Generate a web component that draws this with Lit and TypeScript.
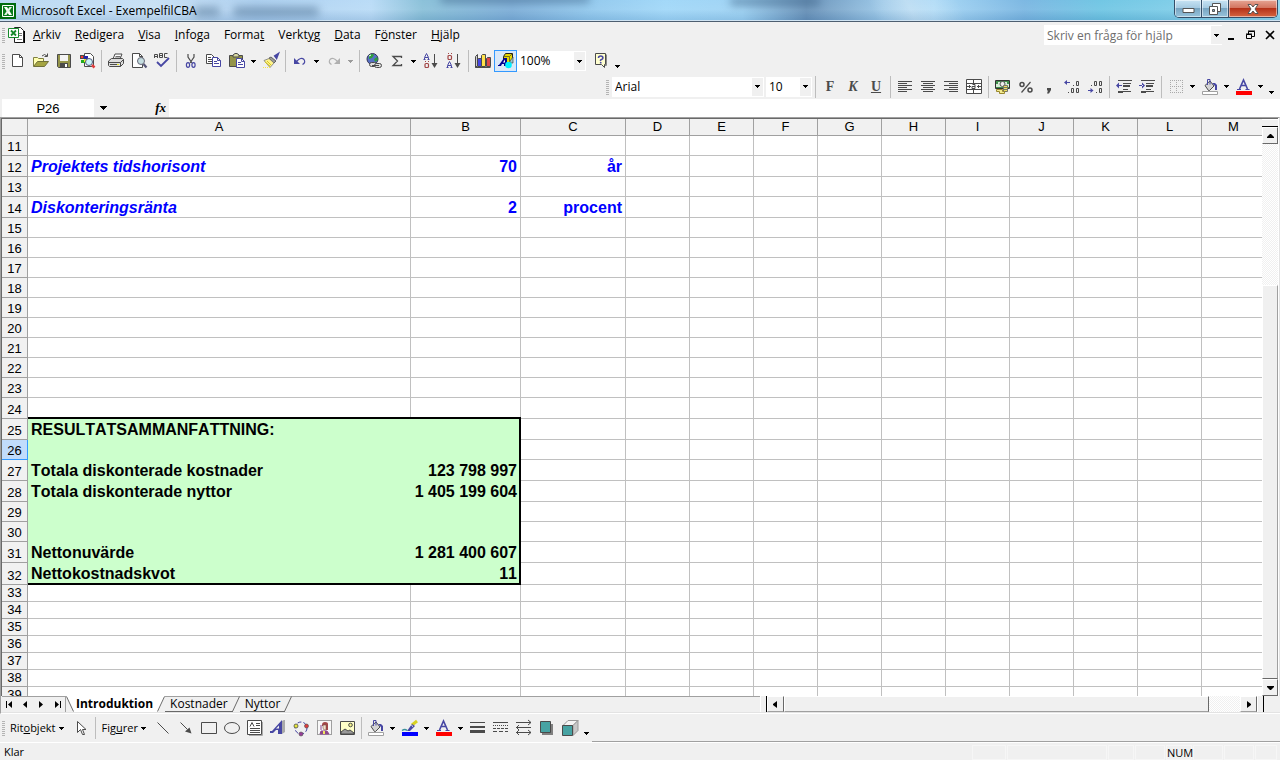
import { LitElement, html, svg, css, nothing, TemplateResult } from "lit";
import { customElement, property } from "lit/decorators.js";
import { classMap } from "lit/directives/class-map.js";

const INK = "#4b4b4b";
const BLUE = "#4747a3";

const page = (x: number, y: number) => svg`
  <path d="M${x + 0.5} ${y + 0.5}h5l3 3v6h-8z" fill="#fff" stroke=${BLUE}/>
  <path d="M${x + 5.5} ${y + 0.5}v3h3M${x + 2} ${y + 4.5}h3M${x + 2} ${y + 6.5}h5" fill="none" stroke=${BLUE}/>`;

const bucket = svg`
  <path d="M3 6.500l5-4.500l4 5l-4.500 4.500h-1z" fill="#d4d4d4" stroke=${INK}/>
  <path d="M5.500 6v-5.500h2.500v5" fill="none" stroke=${BLUE}/>
  <path d="M10 4h3l2 2v5h-2v-4z" fill=${BLUE}/>`;

const sortA = (y: number) =>
  svg`<path d="M1.500 ${y + 6}v-1.500l2-4 2 4v1.500M2 ${y + 4.5}h3M.5 ${y + 6.5}h2M4.500 ${y + 6.5}h2" fill="none" stroke=${BLUE}/>`;
const sortO = (y: number) =>
  svg`<path d="M2 ${y + 0.5}h1M5 ${y + 0.5}h1" stroke="#a34747"/><rect x="2" y=${y + 2.5} width="3.500" height="4" rx="1" fill="none" stroke="#a34747" stroke-width="1.200"/>`;
const sortArrow = svg`<path d="M11.500 1v9" stroke=${INK}/><path d="M8.500 10h6l-3 5z" fill=${INK}/>`;

const icons: Record<string, unknown> = {
  none: nothing,
  newDoc: svg`<path d="M2.500 1.500h7l3 3v9h-10z" fill="#fff" stroke=${INK}/><path d="M9.500 1.500v3h3" fill="none" stroke=${INK}/>`,
  open: svg`<path d="M.5 13V4.500h4l1 1h5V9" fill="#ffffb0" stroke="#808040"/><path d="M.5 13.500l4-5h11l-4 5z" fill="#a5a542" stroke="#70703a"/><path d="M9 3q2.500-3 5 0M14.500 .5v3h-3" fill="none" stroke=${INK}/>`,
  save: svg`<path d="M1.500 1.500h13v13h-12l-1-1z" fill="#94944a" stroke=${INK}/><path d="M4 2h8v6H4z" fill="#f4f4f4"/><path d="M4 10h8v4H4z" fill=${INK}/><path d="M9 11h2v3H9z" fill="#fff"/>`,
  search: svg`<path d="M5.500 .5h6l3 3v10h-9z" fill="#fff" stroke=${INK}/><path d="M1 2h4v4H1z" fill=${INK}/><path d="M2 3h2v2H2z" fill="#f33"/><path d="M5 3h4v4H5z" fill="#22a"/><path d="M2 7h4v3H2z" fill="#2a2"/><path d="M5 6h3v3H5z" fill="#ee2"/><circle cx="10" cy="9" r="3.500" fill="#c9f4fa" stroke="#557"/><path d="M13 12l2.500 2.500" stroke="#e03c3c" stroke-width="2.500"/>`,
  print: svg`<path d="M5 6l2-5h7l-2 5z" fill="#fff" stroke=${INK}/><path d="M7.500 3.500h5M7 5h5" stroke=${INK} stroke-width=".8"/><path d="M.5 8l3-2.500h11l1 1v4l-3 3h-11l-1-1z" fill="#ddd" stroke=${INK}/><path d="M.5 9.500h12l3-3M12.500 9.500v4M2 11.500h9" fill="none" stroke=${INK}/><path d="M9 11h2v1H9z" fill="#e8e820"/>`,
  preview: svg`<path d="M1.500 .5h7l3 3v11h-10z" fill="#fff" stroke=${INK}/><path d="M8.500 .5v3h3" fill="none" stroke=${INK}/><circle cx="10" cy="8" r="3.500" fill="#c4dde0" stroke="#667"/><path d="M12.500 11l3 3.500" stroke="#557" stroke-width="2.200"/>`,
  spell: svg`<path d="M.5 5V1.500h3V5M.5 3.500h3M5.500 .5V4.500h3v-4zM5.500 2.500h3M13.500 .5h-3v4h3" fill="none" stroke=${INK}/><path d="M3 9l4 4l8-8" fill="none" stroke=${BLUE} stroke-width="1.800"/>`,
  cut: svg`<path d="M5 1v3l4 6M11 1v3l-4 6" fill="none" stroke=${INK} stroke-width="1.200"/><ellipse cx="5" cy="12" rx="1.600" ry="2.300" fill="none" stroke=${BLUE} stroke-width="1.200"/><ellipse cx="10.500" cy="12" rx="1.600" ry="2.300" fill="none" stroke=${BLUE} stroke-width="1.200"/>`,
  copy: svg`<path d="M.5 1.500h5l3 3v6h-8z" fill="#fff" stroke=${INK}/><path d="M2 4.500h3M2 6.500h5M2 8.500h5" stroke=${INK}/>${page(6, 4)}`,
  paste: svg`<path d="M.5 2.500h13v11H.5z" fill="#94944a" stroke=${INK}/><path d="M4 4V2l2-1.500h2L10 2v2z" fill="#d8d8a0" stroke=${INK}/>${page(7, 5)}`,
  brush: svg`<path d="M15 1l-3 2 1.500 2z" fill=${BLUE} stroke=${BLUE} stroke-width="2"/><path d="M8 4l5 4-2 2-5-5z" fill="#999" stroke=${INK} stroke-width=".8"/><path d="M6 5.500l5 4.500-4 4.500-6-7z" fill="#fff38a" stroke="#777" stroke-width=".8"/><path d="M2 9l5 4M4 8l4 4" stroke="#d8c820"/><path d="M0 14.500h7" stroke="#f4e34a" stroke-dasharray="1 1"/>`,
  undo: svg`<path d="M2 5v6h6z" fill=${BLUE}/><path d="M4.500 8.500Q9 3.500 12 6.500q2 3-1.500 5" fill="none" stroke=${BLUE} stroke-width="1.200"/>`,
  redo: svg`<path d="M14 5v6H8z" fill="#b0b0b0"/><path d="M11.500 8.500Q7 3.500 4 6.500q-2 3 1.500 5" fill="none" stroke="#b0b0b0" stroke-width="1.200"/>`,
  link: svg`<circle cx="6.500" cy="6" r="5.500" fill="#5770c4" stroke="#335"/><path d="M3 2q4-2 5 0l-2 3-3 1zM8 6l3-2 1 3-3 2z" fill="#2f9e3c"/><path d="M3 3l2-1" stroke="#fff"/><rect x="3.500" y="9.500" width="7" height="4" rx="2" fill="#ddd" stroke=${INK}/><rect x="8.500" y="10.500" width="7" height="4" rx="2" fill="#ddd" stroke=${INK}/><path d="M6 12.500h7" stroke=${INK}/>`,
  sum: svg`<path d="M12.500 5V3.500H4l4.500 4.500L4 12.500h8.500V11" fill="none" stroke=${INK} stroke-width="1.300"/>`,
  sortUp: svg`${sortA(0)}${sortO(8)}${sortArrow}`,
  sortDown: svg`${sortO(0)}${sortA(8)}${sortArrow}`,
  chart: svg`<path d="M.5 3.500l2-2v11l-2 2z" fill="#ccc" stroke=${INK}/><path d="M.5 14.500h15" stroke=${INK}/><path d="M2.500 6.500l1-1h3v8h-4z" fill="#4747e3" stroke=${INK}/><path d="M6.500 2.500l1-1h3v12h-4z" fill="#ffe14a" stroke=${INK}/><path d="M11.500 5.500l1-1h3v9h-4z" fill="#e04848" stroke=${INK}/>`,
  drawing: svg`<path d="M5.500 3.500l2-3h7v7l-3 3h-6z" fill="#e8d800" stroke="#222"/><path d="M6 3.500h5.500v5M11.500 3.500l3-3" fill="none" stroke="#77701c"/><path d="M0 12h1l5-7h3v8H6v-2H4l-1 2H0z" fill="#000090"/><path d="M5 9.500l2-3v3z" fill="#fff"/><path d="M12 8l3-4v6h-3z" fill="#9cc8d0" stroke="#333" stroke-width=".6"/><circle cx="10.500" cy="12" r="3.300" fill="#00f0ff"/>`,
  help: svg`<path d="M2.500 .5h10v11h-1v3l-3-3h-6z" fill="#ffffd0" stroke=${INK}/><path d="M13.500 1.500v11h-1.500" fill="none" stroke="#888"/><path d="M5.500 5q0-2 2.200-2t2.200 2q0 1-1.400 1.600T7.700 8M7.700 9v1.500" fill="none" stroke=${BLUE} stroke-width="1.600"/>`,
  left: svg`<path d="M1 2.500h14M1 4.500h9M1 6.500h14M1 8.500h9M1 10.500h14M1 12.500h9" stroke=${INK}/>`,
  center: svg`<path d="M1 2.500h14M3 4.500h10M1 6.500h14M3 8.500h10M1 10.500h14M3 12.500h10" stroke=${INK}/>`,
  right: svg`<path d="M1 2.500h14M6 4.500h9M1 6.500h14M6 8.500h9M1 10.500h14M6 12.500h9" stroke=${INK}/>`,
  merge: svg`<path d="M.5 .5h15v14H.5zM.5 4.500h15M.5 10.500h15M7.500 1v3M7.500 11v4" fill="#fff" stroke=${INK}/><path d="M1 7.500h4M3.500 6v3M11 7.500h4M12.500 6v3M6.500 5.500h2.500v4h-3v-2h3" fill="none" stroke=${INK}/>`,
  money: svg`<path d="M.5 1.500h14v8H.5z" fill="#d8ecd8" stroke="#333"/><path d="M1 2h13v1H1zM1 8h13v1H1zM1 3h2v2H1zM12 3h2v2h-2z" fill="#3f8f4c"/><circle cx="7.500" cy="5" r="2.500" fill="#eee" stroke="#555"/><path d="M8.500 6.500h4v6h-4zM8.500 8.500h4M8.500 10.500h4" fill="#f0e060" stroke="#776"/><path d="M1.500 10.500h6v2h2v2h-5v-2h-3z" fill="#f4eb90" stroke="#998830"/>`,
  percent: svg`<circle cx="4" cy="5.500" r="2" fill="none" stroke=${INK} stroke-width="1.500"/><circle cx="12" cy="11" r="2" fill="none" stroke=${INK} stroke-width="1.500"/><path d="M12.500 3l-9 10.500" stroke=${INK} stroke-width="1.200"/>`,
  comma: svg`<path d="M6 9h4v2l-2 3.500H6l1-3H6z" fill=${INK}/>`,
  moreDec: svg`<path d="M1 3.500h5" stroke=${BLUE}/><path d="M0 3.500l3-2.500v5z" fill=${BLUE}/><path d="M9 6.500h1M12.500 2.500h2v4h-2zM4 13.500h1M7.500 9.500h2v4h-2zM12.500 9.500h2v4h-2z" fill="none" stroke=${INK}/>`,
  lessDec: svg`<path d="M1 11.500h5" stroke=${BLUE}/><path d="M6.500 11.500l-3-2.500v5z" fill=${BLUE}/><path d="M9 13.500h1M12.500 9.500h2v4h-2zM4 6.500h1M7.500 2.500h2v4h-2zM12.500 2.500h2v4h-2z" fill="none" stroke=${INK}/>`,
  outdent: svg`<path d="M2 1.500h14M2 13.500h5M7 4.500h8M7 10.500h5M2 12.500h13" stroke=${INK}/><path d="M7 7h7" stroke=${INK} stroke-width="2"/><path d="M0 6.500l3-3v6zM2 6h4v1H2z" fill=${BLUE}/>`,
  indent: svg`<path d="M2 1.500h14M2 13.500h5M7 4.500h8M7 10.500h5M2 12.500h13" stroke=${INK}/><path d="M7 7h7" stroke=${INK} stroke-width="2"/><path d="M6 6.500l-3-3v6zM0 6h4v1H0z" fill=${BLUE}/>`,
  borders: svg`<path d="M2 1.500h13M2 7.500h13M2 13.500h13M2.500 1v13M8.500 1v13M14.500 1v13" stroke="#aaa" stroke-dasharray="1 1"/>`,
  fill: svg`${bucket}<path d="M.5 12.500h15v3H.5z" fill="#fff" stroke="#a0a0a0"/>`,
  fontColor: svg`<path d="M0 12h16v4H0z" fill="#f00"/><path d="M3.500 10l4-9 4 9M5 6.500h5" fill="none" stroke=${BLUE} stroke-width="1.600"/><path d="M1 10.500h4M9.500 10.500h4" stroke=${BLUE}/>`,
  lineColor: svg`<path d="M0 12h16v4H0z" fill="#00f"/><path d="M15 1l-5 4" stroke="#d8d020" stroke-width="3"/><path d="M10 4l3 2-5 5H5z" fill=${BLUE}/><path d="M9.500 5.500l1.500 1" stroke="#fff"/><path d="M0 10.500q3-2 5 0" stroke="#3b8f9c" stroke-width="1.500" fill="none"/>`,
  pointer: svg`<path d="M4.500 1.500v11l3-3l2 5h2l-2-5h3.500z" fill="#fff" stroke=${INK}/>`,
  line: svg`<path d="M2.500 2.500l11 11" stroke=${INK}/>`,
  arrow: svg`<path d="M2.500 2.500l7 7" stroke=${INK}/><path d="M13.500 13.500l-2-6-4.500 4z" fill=${INK}/>`,
  rect: svg`<path d="M.5 2.500h15v11H.5z" fill="none" stroke=${INK}/>`,
  ellipse: svg`<ellipse cx="8" cy="8" rx="7.500" ry="5.500" fill="none" stroke=${INK}/>`,
  textbox: svg`<path d="M.5 .5h14v14H.5z" fill="#fff" stroke=${INK}/><path d="M15.500 2v13.500H2" fill="none" stroke="#aaa"/><path d="M3 6.500l2-4 2 4M9 3.500h4M9 5.500h4M3 8.500h10M3 10.500h10M3 12.500h10" fill="none" stroke=${INK}/>`,
  wordart: svg`<path d="M0 11h2L12 0v14H8v-4H6l-3 3H0z" fill=${BLUE}/><path d="M6 8.500l3-3v3z" fill="#eee"/><path d="M12 1l2-1h1v12l-3 2z" fill="#aaa"/>`,
  diagram: svg`<circle cx="8" cy="8" r="6" fill="none" stroke=${BLUE} stroke-dasharray="4 2"/><circle cx="3" cy="6" r="2" fill="#e8e83c" stroke=${INK} stroke-width=".8"/><circle cx="13.500" cy="6" r="2" fill="#e03c3c" stroke=${INK} stroke-width=".6"/><circle cx="8" cy="14" r="2" fill="#973c97" stroke=${INK} stroke-width=".6"/>`,
  clipart: svg`<path d="M1.500 .5h14v14h-14z" fill="#f8f8f8" stroke=${INK} stroke-dasharray="1 1"/><path d="M6 5q0-3 3-3t3 2v6h-2V6H6z" fill="#a34747"/><path d="M7 5h3v5H8l-1-2z" fill="#f6e0c8" stroke="#755" stroke-width=".6"/><path d="M5 5v5M4 14l1-3h6l2 3z" fill="#8c478c" stroke="#8c478c"/><path d="M7 11h2v3H7z" fill="#f0e860"/>`,
  picture: svg`<path d="M1.500 1.500h14v13h-14z" fill="#ffffc8" stroke=${INK}/><circle cx="11.500" cy="5" r="1.800" fill="#f4f48a" stroke=${INK}/><path d="M2 14v-2l4-3 3 2 2-1 4 3v1z" fill="#999" stroke=${INK}/>`,
  weights: svg`<path d="M0 2.500h15" stroke=${INK}/><path d="M0 7h15" stroke=${INK} stroke-width="2"/><path d="M0 11.500h15" stroke=${INK} stroke-width="3"/>`,
  dashes: svg`<path d="M0 2.500h15" stroke=${INK}/><path d="M0 5.500h15" stroke=${INK} stroke-dasharray="1 1"/><path d="M0 8.500h15" stroke=${INK} stroke-dasharray="3 1"/><path d="M0 11.500h15" stroke=${INK} stroke-dasharray="4 2"/>`,
  arrows: svg`<path d="M0 2.500h15M12 0l3 2.500-3 2.500M0 7.500h15M3 5L.5 7.500L3 10M0 12.500h15M12 10l3 2.500-3 2.500M3 10L.5 12.500L3 15" fill="none" stroke=${INK}/>`,
  shadow: svg`<path d="M3 4h11v11H3z" fill="#808080"/><path d="M1.500 1.500h10v11h-10z" fill="#47a3a3" stroke=${INK}/>`,
  cube: svg`<path d="M1 5.500l5-5h10l-5 5z" fill="#f4f4f4" stroke="#999"/><path d="M11 5.500l5-5v10l-5 5z" fill="#c8c8c8" stroke="#999"/><path d="M.5 5.500h10v10H.5z" fill="#47a3a3" stroke=${INK}/>`,
};

const icon = (name: string) =>
  html`<svg class="icon" viewBox="0 0 16 16" width="16" height="16" aria-hidden="true">${icons[name]}</svg>`;
const caret = html`<svg class="caret" viewBox="0 0 5 3" width="5" height="3" aria-hidden="true"><path d="M0 0h5v1H4v1H3v1H2V2H1V1H0z" shape-rendering="crispEdges"/></svg>`;

type Tool = [kind: string, icon?: string, label?: string];

const standard: Tool[] = [
  ["b", "newDoc", "Nytt"], ["b", "open", "Öppna"], ["b", "save", "Spara"], ["b", "search", "Sök"], ["sep"],
  ["b", "print", "Skriv ut"], ["b", "preview", "Förhandsgranska"], ["b", "spell", "Stavning"], ["sep"],
  ["b", "cut", "Klipp ut"], ["b", "copy", "Kopiera"], ["b", "paste", "Klistra in"], ["v", "", "Fler inklistringsval"],
  ["b", "brush", "Hämta format"], ["sep"],
  ["b", "undo", "Ångra"], ["v", "", "Ångra flera"], ["b", "redo", "Gör om"], ["off", "", "Gör om flera"], ["sep"],
  ["b", "link", "Hyperlänk"], ["b", "sum", "Autosumma"], ["v", "", "Fler funktioner"],
  ["b", "sortUp", "Sortera stigande"], ["b", "sortDown", "Sortera fallande"], ["sep"],
  ["b", "chart", "Diagramguiden"], ["on", "drawing", "Rita"],
];
const formatting: Tool[] = [
  ["sep"], ["t", "F", "Fet"], ["t", "K", "Kursiv"], ["t", "U", "Understruken"], ["sep"],
  ["b", "left", "Vänsterjustera"], ["b", "center", "Centrera"], ["b", "right", "Högerjustera"], ["b", "merge", "Centrera över kolumner"], ["sep"],
  ["b", "money", "Valuta"], ["b", "percent", "Procent"], ["b", "comma", "Tusental"], ["b", "moreDec", "Öka decimal"], ["b", "lessDec", "Minska decimal"], ["sep"],
  ["b", "outdent", "Minska indrag"], ["b", "indent", "Öka indrag"], ["sep"],
  ["b", "borders", "Kantlinjer"], ["v", "", "Fler kantlinjer"], ["b", "fill", "Fyllningsfärg"], ["v", "", "Fler fyllningsfärger"],
  ["b", "fontColor", "Teckenfärg"], ["v", "", "Fler teckenfärger"], ["end", "", "Alternativ"],
];
const shapes: Tool[] = [
  ["b", "line", "Linje"], ["b", "arrow", "Pil"], ["b", "rect", "Rektangel"], ["b", "ellipse", "Ellips"], ["b", "textbox", "Textruta"],
  ["b", "wordart", "WordArt"], ["b", "diagram", "Diagram"], ["b", "clipart", "ClipArt"], ["b", "picture", "Bild"], ["sep"],
  ["b", "fill", "Fyllningsfärg"], ["v", "", "Fler fyllningsfärger"], ["b", "lineColor", "Linjefärg"], ["v", "", "Fler linjefärger"],
  ["b", "fontColor", "Teckenfärg"], ["v", "", "Fler teckenfärger"], ["b", "weights", "Linjeformat"], ["b", "dashes", "Streckformat"],
  ["b", "arrows", "Pilformat"], ["b", "shadow", "Skugga"], ["b", "cube", "3D"], ["end", "", "Alternativ"],
];

const toolStyles = css`
  * { box-sizing: border-box; }
  button { border: 0; padding: 0; margin: 0; background: none; font: inherit; color: inherit; }
  .icon, .caret { display: block; flex: none; overflow: visible; }
  .tools { display: flex; align-items: center; height: 24px; }
  .grip { width: 3px; height: 16px; margin: 0 1px 0 2px; background: repeating-linear-gradient(#f0f0f0 0 1px, #b4b4b4 1px 2px); flex: none; }
  .sep { width: 1px; height: 22px; margin: 0 2px 0 3px; background: #bdbdbd; flex: none; }
  .tool { display: flex; align-items: center; justify-content: center; width: 23px; height: 22px; padding-left: 1px; flex: none; }
  .drop { width: 11px; padding: 0; }
  .off { opacity: 0.35; }
  .end { align-items: flex-end; padding-bottom: 4px; }
  .on { border: 1px solid #3399ff; background: #d9e8f8; }
  .letter { font: bold 14px "Liberation Serif", serif; color: #4b4b4b; }
  .italic { font-style: italic; }
  .under { text-decoration: underline; }
`;

const tools = (list: Tool[]) =>
  list.map(([kind, name, label]) => {
    if (kind === "sep") return html`<span class="sep"></span>`;
    if (kind === "t")
      return html`<button class=${classMap({ tool: true, letter: true, italic: name === "K", under: name === "U" })} aria-label=${label!}>${name}</button>`;
    const small = kind === "v" || kind === "off" || kind === "end";
    return html`<button class=${classMap({ tool: true, drop: small, off: kind === "off", end: kind === "end", on: kind === "on" })} aria-label=${label!}>
      ${small ? caret : icon(name!)}</button>`;
  });

const key = (text: string, at: number) =>
  html`${text.slice(0, at)}<u>${text[at]}</u>${text.slice(at + 1)}`;

@customElement("title-bar")
class TitleBar extends LitElement {
  static styles = css`
    * { box-sizing: border-box; }
    :host { display: block; }
    .bar {
      display: flex; align-items: flex-start; height: 22px; position: relative; overflow: hidden;
      border-bottom: 1px solid #4d5e70; box-shadow: inset 0 -1px #cfe3f2;
      background:
        linear-gradient(rgba(255,255,255,.08), rgba(255,255,255,.12) 45%, rgba(50,90,140,.14)),
        linear-gradient(65deg, transparent 68%, rgba(255,255,255,.3) 71%, transparent 75%),
        linear-gradient(90deg, #b4d6f2 0, #c4def4 12%, #a8cdef 20%, #b5d9f6 29%, #82bcd6 33%, #76aad6 40%, #8bc5ec 46%, #9bd5f8 52%, #98d0f3 58%, #608cb5 63%, #94c4e6 69%, #a2d5f5 73%, #72b2e0 80%, #66c2e2 86%, #8bd5ed 100%);
    }
    .shade { position: absolute; top: 7px; height: 9px; border-radius: 4px; background: #3e6386; filter: blur(4px); opacity: .5; }
    .one { left: 194px; width: 26px; } .two { left: 233px; width: 86px; } .three { left: 440px; width: 150px; top: -6px; } .four { left: 730px; width: 90px; top: -3px; }
    .logo { margin: 3px 5px 0 0; flex: none; position: relative; }
    .title { margin: 0; flex: 1; font: 12px/21px "Open Sans", sans-serif; color: #000; position: relative; }
    .buttons { display: flex; margin-right: 2px; border: 1px solid #344e68; border-top: 0; border-radius: 0 0 5px 5px; overflow: hidden; position: relative; }
    button { display: flex; align-items: center; justify-content: center; width: 27px; height: 17px; padding: 0; border: 0; border-right: 1px solid #344e68;
      background: linear-gradient(#c8e4f4, #a6cbe2 45%, #78a5c2 50%, #98c4dc); box-shadow: inset 0 0 0 1px rgba(255,255,255,.5); }
    .min { align-items: flex-end; padding-bottom: 4px; }
    .close { width: 48px; border: 0; background: linear-gradient(#e6a594, #d37560 45%, #b53219 50%, #d56641); }
  `;
  render() {
    return html`<header class="bar">
      <span class="shade one"></span><span class="shade two"></span><span class="shade three"></span><span class="shade four"></span>
      <svg class="logo" viewBox="0 0 16 16" width="16" height="16" aria-hidden="true">
        <path d="M0 0h16v16H0z" fill="#006b10"/><path d="M2.500 2.500h11v11h-11z" fill="#0a7c1c" stroke="#fff"/>
        <path d="M4 4h3l5 8H9z" fill="#fff"/><path d="M12 4H9.500L4 12h2.500z" fill="#e6f4e6"/>
      </svg>
      <h1 class="title">Microsoft Excel - ExempelfilCBA</h1>
      <div class="buttons">
        <button class="min" aria-label="Minimera"><svg viewBox="0 0 13 5" width="13" height="5"><path d="M1 .5h11v4H1z" fill="#fff" stroke="#555"/></svg></button>
        <button aria-label="Återställ"><svg viewBox="0 0 12 12" width="12" height="12"><path d="M3.500 .5h8v8h-8z" fill="#fff" stroke="#555"/><path d="M.5 3.500h8v8h-8z" fill="#fff" stroke="#555"/><path d="M3.500 6.500h2v2h-2z" fill="#8ab" stroke="#555"/></svg></button>
        <button class="close" aria-label="Stäng"><svg viewBox="0 0 12 10" width="12" height="10"><path d="M1 .5h3l2 2.500 2-2.500h3L8 5l3 4.500H8L6 7 4 9.500H1L4 5z" fill="#fff" stroke="#555"/></svg></button>
      </div>
    </header>`;
  }
}

@customElement("combo-box")
class ComboBox extends LitElement {
  @property() value = "";
  @property() label = "";
  static styles = css`
    * { box-sizing: border-box; }
    :host { display: block; position: relative; height: 20px; background: #fff; }
    select { appearance: none; display: block; width: 100%; height: 20px; border: 0; padding: 0 14px 0 3px; background: none; font: 12px/18px "Open Sans", sans-serif; color: #000; }
    .knob { position: absolute; top: 1px; right: 1px; bottom: 1px; width: 11px; display: flex; align-items: center; justify-content: center; background: #f0f0f0; pointer-events: none; }
  `;
  render() {
    return html`<select aria-label=${this.label}><option>${this.value}</option></select><span class="knob">${caret}</span>`;
  }
}

@customElement("command-bars")
class CommandBars extends LitElement {
  static styles = [toolStyles, css`
    :host { display: block; background: #f0f0f0; font: 12px/16px "Open Sans", sans-serif; }
    .menu { display: flex; align-items: center; height: 26px; }
    .items { display: flex; gap: 14px; margin-left: 8px; flex: 1; white-space: nowrap; }
    .doc { margin-left: 2px; flex: none; }
    .ask { display: flex; width: 178px; height: 20px; background: #fff; }
    .ask input { flex: 1; min-width: 0; border: 0; padding: 0 3px; background: none; font: 12px "Open Sans", sans-serif; outline: 0; }
    .ask input::placeholder { color: #6d6d6d; opacity: 1; }
    .ask button { display: flex; align-items: center; justify-content: center; width: 11px; margin: 1px 0; background: #f0f0f0; }
    .child { display: flex; gap: 11px; margin: 0 6px 0 5px; }
    .zoom { width: 69px; }
    .row1 { height: 26px; }
    .row2 { justify-content: flex-end; height: 25px; padding-right: 3px; }
    .font { width: 152px; margin: 0 2px; }
    .size { width: 46px; }
    .gap { margin-left: 3px; }
    .formula { display: flex; height: 18px; align-items: stretch; }
    .name { width: 92px; margin-left: 2px; border: 0; padding: 0; background: #fff; text-align: center; font: 13px "Liberation Sans", sans-serif; }
    .pick { width: 19px; display: flex; align-items: center; justify-content: center; }
    .fx { width: 56px; text-align: right; padding-right: 3px; font: italic bold 13px "Liberation Serif", serif; }
    .entry { flex: 1; min-width: 0; border: 0; background: #fff; }
  `];
  render() {
    const menus: [string, number][] = [["Arkiv", 0], ["Redigera", 0], ["Visa", 0], ["Infoga", 0], ["Format", 5], ["Verktyg", 5], ["Data", 0], ["Fönster", 1], ["Hjälp", 0]];
    return html`
      <nav class="menu">
        <span class="grip"></span>
        <svg class="doc" viewBox="0 0 17 16" width="17" height="16" aria-hidden="true">
          <path d="M6.500 .5h6l3 3v12h-9z" fill="#fff" stroke="#222"/><path d="M16.500 4v12H8" fill="none" stroke="#000"/><path d="M11 6.500h3M11 8.500h3M9 12.500h5" stroke="#777"/>
          <path d="M.5 1.500h10v9H.5z" fill="#fff" stroke="#178a2c"/><path d="M3 3.500l5 5M8 3.500l-5 5" stroke="#178a2c" stroke-width="1.800"/>
        </svg>
        <div class="items">${menus.map(([m, i]) => html`<button>${key(m, i)}</button>`)}</div>
        <div class="ask"><input aria-label="Fråga" placeholder="Skriv en fråga för hjälp"><button aria-label="Tidigare frågor">${caret}</button></div>
        <div class="child">
          <button aria-label="Minimera bok"><svg class="icon" viewBox="0 0 8 10" width="8" height="10"><path d="M1 8h6v2H1z"/></svg></button>
          <button aria-label="Återställ bok"><svg class="icon" viewBox="0 0 9 10" width="9" height="10"><path d="M2.500 5V1.500h6v5H6M2 1h7M.5 4.500h5v4h-5zM0 4h6" fill="none" stroke="#000"/></svg></button>
          <button aria-label="Stäng bok"><svg class="icon" viewBox="0 0 8 10" width="8" height="10"><path d="M0 1l8 8M8 1L0 9" stroke="#000" stroke-width="1.600"/></svg></button>
        </div>
      </nav>
      <div class="tools row1"><span class="grip"></span>${tools(standard)}
        <combo-box class="zoom" label="Zooma" value="100%"></combo-box>
        <span class="gap"></span>${tools([["b", "help", "Hjälp"], ["end", "", "Alternativ"]])}
      </div>
      <div class="tools row2"><span class="grip"></span>
        <combo-box class="font" label="Teckensnitt" value="Arial"></combo-box>
        <combo-box class="size" label="Storlek" value="10"></combo-box>${tools(formatting)}
      </div>
      <div class="formula">
        <input class="name" aria-label="Namnruta" value="P26">
        <button class="pick" aria-label="Välj namn"><svg class="caret" viewBox="0 0 7 4" width="7" height="4"><path d="M0 0h7v1H6v1H5v1H4v1H3V3H2V2H1V1H0z" shape-rendering="crispEdges"/></svg></button>
        <button class="fx" aria-label="Infoga funktion">fx</button>
        <input class="entry" aria-label="Formelfält">
      </div>`;
  }
}

interface Row { n: number; h: number; a?: string; b?: string; c?: string; }
const h = (n: number, height: number, a = "", b = "", c = ""): Row => ({ n, h: height, a, b, c });
const rows: Row[] = [
  h(11, 20), h(12, 21, "Projektets tidshorisont", "70", "år"), h(13, 20), h(14, 21, "Diskonteringsränta", "2", "procent"),
  ...[15, 16, 17, 18, 19, 20, 21, 22, 23].map((n) => h(n, 20)), h(24, 21),
  h(25, 21, "RESULTATSAMMANFATTNING:"), h(26, 20),
  h(27, 21, "Totala diskonterade kostnader", "123 798 997"), h(28, 21, "Totala diskonterade nyttor", "1 405 199 604"),
  h(29, 20), h(30, 20), h(31, 21, "Nettonuvärde", "1 281 400 607"), h(32, 22, "Nettokostnadskvot", "11"),
  ...[33, 34, 35, 36, 37, 38, 39].map((n) => h(n, 17)),
];
const columns = "ABCDEFGHIJKLM".split("");

@customElement("work-sheet")
class WorkSheet extends LitElement {
  static styles = css`
    * { box-sizing: border-box; }
    :host { box-sizing: border-box; display: flex; min-height: 0; background: #fff; border-top: 1px solid #a0a0a0; border-left: 1px solid #a0a0a0; border-right: 1px solid #e3e3e3; padding-right: 1px; }
    .view { flex: 1; min-width: 0; overflow: hidden; border-top: 1px solid #696969; border-left: 1px solid #696969; }
    table { table-layout: fixed; width: 0; border-collapse: separate; border-spacing: 0; font-family: "Liberation Sans", Arial, sans-serif; font-kerning: none; color: #000; }
    .num { width: 26px; } .wide { width: 383px; } .mid { width: 110px; } .unit { width: 105px; } .std { width: 64px; }
    th { padding: 0; font-size: 13px; line-height: 16px; font-weight: normal; background: #f1f1f1; border-right: 1px solid #a0a0a0; border-bottom: 1px solid #a0a0a0; }
    tbody th { vertical-align: bottom; }
    tbody th div { height: 16px; }
    td { padding: 0 3px; font-size: 16px; line-height: 18px; font-weight: bold; white-space: nowrap; text-align: right; vertical-align: bottom; border-right: 1px solid #c0c0c0; border-bottom: 1px solid #c0c0c0; }
    td:nth-child(2) { text-align: left; }
    .input td { color: #0000ff; }
    .input td:nth-child(2) { font-style: italic; }
    .above td:nth-child(2), .above td:nth-child(3) {
      border: 0;
      background: linear-gradient(#000, #000) 0 100% / 100% 2px no-repeat, linear-gradient(#c0c0c0, #c0c0c0) 100% 0 / 1px 100% no-repeat;
    }
    .sum td:nth-child(2) { background: #ccffcc; border: 0; padding-bottom: 1px; }
    .sum td:nth-child(3) { background: #ccffcc; border: 0; border-right: 2px solid #000; padding: 0 2px 1px 0; }
    .last td:nth-child(2), .last td:nth-child(3) { border-bottom: 2px solid #000; padding-bottom: 0; }
    .current th { background: #c1dcfc; border-color: #3399ff; }
    .scroll { display: flex; flex-direction: column; width: 16px; background: #f0f0f0; border-top: 1px solid #696969; }
    .split { height: 8px; border-top: 1px solid #fff; border-bottom: 1px solid #000; }
    button { display: flex; align-items: center; justify-content: center; height: 17px; padding: 0; border: 1px solid; border-color: #fff #696969 #696969 #fff; background: #f0f0f0; }
    .track { flex: 142; background: repeating-conic-gradient(#f0f0f0 0 25%, #fff 0 50%) 0 0 / 2px 2px; }
    .thumb { flex: 394; background: #f0f0f0; border: 1px solid; border-color: #fff #a0a0a0 #696969 #fff; }
  `;
  render() {
    return html`
      <div class="view"><table>
        <colgroup><col class="num"><col class="wide"><col class="mid"><col class="unit">${columns.slice(3).map(() => html`<col class="std">`)}</colgroup>
        <thead><tr><th></th>${columns.map((c) => html`<th scope="col">${c}</th>`)}</tr></thead>
        <tbody>${rows.map((r) => html`<tr style="height:${r.h}px" class=${classMap({
          input: r.n < 15, above: r.n === 24, sum: r.n >= 25 && r.n <= 32, last: r.n === 32, current: r.n === 26,
        })}><th scope="row"><div>${r.n}</div></th><td>${r.a}</td><td>${r.b}</td><td>${r.c}</td>${columns.slice(3).map(() => html`<td></td>`)}</tr>`)}</tbody>
      </table></div>
      <div class="scroll">
        <div class="split"></div>
        <button aria-label="Rulla uppåt"><svg viewBox="0 0 7 4" width="7" height="4"><path d="M3 0h1l3 3v1H0V3z"/></svg></button>
        <div class="track"></div><div class="thumb"></div>
        <button aria-label="Rulla nedåt"><svg viewBox="0 0 7 4" width="7" height="4"><path d="M0 0h7v1L4 4H3L0 1z"/></svg></button>
      </div>`;
  }
}

@customElement("sheet-tabs")
class SheetTabs extends LitElement {
  static styles = css`
    * { box-sizing: border-box; }
    :host { box-sizing: border-box; display: flex; height: 18px; background: #f0f0f0; border-left: 1px solid #a0a0a0; border-bottom: 1px solid #fff; box-shadow: inset 0 -1px #e3e3e3; font: 12px/14px "Open Sans", sans-serif; padding: 0 2px 1px 1px; }
    button { border: 0; padding: 0; margin: 0; background: none; font: inherit; color: #000; white-space: nowrap; }
    .left { flex: 757; min-width: 0; display: flex; border-top: 1px solid #a0a0a0; }
    .nav { display: flex; justify-content: space-around; width: 64px; border-right: 1px solid #a0a0a0; flex: none; }
    svg { display: block; flex: none; }
    .nav button, .arrow { display: flex; align-items: center; justify-content: center; }
    .tab { padding: 0 3px 0 5px; border-bottom: 1px solid #696969; }
    .active { background: #fff; font-weight: bold; border: 0; margin-top: -1px; padding: 0 3px 0 2px; }
    .edge { margin-top: -1px; }
    .bar { flex: 504; display: flex; }
    .split { width: 7px; border-left: 1px solid #fff; border-right: 1px solid #000; flex: none; }
    .arrow { width: 17px; border: 1px solid; border-color: #fff #696969 #a0a0a0 #fff; flex: none; }
    .thumb { flex: 425; border: 1px solid; border-color: #fff #696969 #a0a0a0 #fff; }
    .track { flex: 31; background: repeating-conic-gradient(#f0f0f0 0 25%, #fff 0 50%) 0 0 / 2px 2px; }
    .corner { width: 14px; flex: none; }
  `;
  render() {
    const slash = (active: boolean) => html`<svg class="edge" viewBox="0 0 9 16" width="9" height="16">
      ${active ? svg`<path d="M0 0h9L2 16H0z" fill="#fff"/>` : svg`<path d="M0 15.500h2" stroke="#696969"/>`}
      <path d="M8.500 .5L1.500 15.500" stroke="#696969" fill="none"/></svg>`;
    const nav: [string, string][] = [
      ["Första bladet", "M0 0h1v7H0zM6 0v7L2 3.500z"], ["Föregående blad", "M5 0v7L1 3.500z"],
      ["Nästa blad", "M1 0v7l4-3.500z"], ["Sista bladet", "M6 0h1v7H6zM1 0v7l4-3.500z"]];
    return html`
      <div class="left">
        <div class="nav">${nav.map(([l, d]) => html`<button aria-label=${l}><svg viewBox="0 0 7 7" width="7" height="7"><path d=${d}/></svg></button>`)}</div>
        <svg class="edge" viewBox="0 0 8 16" width="8" height="16"><path d="M0 0h8v16z" fill="#fff"/><path d="M.5 .5l7 15" stroke="#696969"/></svg>
        <button class="tab active">Introduktion</button>${slash(true)}
        <button class="tab">Kostnader</button>${slash(false)}
        <button class="tab">Nyttor</button>${slash(false)}
      </div>
      <div class="bar">
        <div class="split"></div>
        <button class="arrow" aria-label="Rulla åt vänster"><svg viewBox="0 0 4 7" width="4" height="7"><path d="M4 0v7L0 4V3z"/></svg></button>
        <div class="thumb"></div><div class="track"></div>
        <button class="arrow" aria-label="Rulla åt höger"><svg viewBox="0 0 4 7" width="4" height="7"><path d="M0 0v7l4-3V3z"/></svg></button>
        <div class="split"></div>
      </div>
      <div class="corner"></div>`;
  }
}

@customElement("drawing-bar")
class DrawingBar extends LitElement {
  static styles = [toolStyles, css`
    :host { display: flex; background: #f0f0f0; font: 11px/16px "Open Sans", sans-serif; }
    .tools { height: 28px; }
    .rest { flex: 1; border-bottom: 1px solid #a0a0a0; }
    .menu { display: flex; align-items: center; gap: 3px; padding: 0 5px 0 4px; white-space: nowrap; }
  `];
  render() {
    return html`<div class="tools"><span class="grip"></span>
        <button class="menu"><span>${key("Ritobjekt", 3)}</span>${caret}</button>
        ${tools([["b", "pointer", "Markera objekt"], ["sep"]])}
        <button class="menu"><span>${key("Figurer", 3)}</span>${caret}</button>
        ${tools(shapes)}
      </div><div class="rest"></div>`;
  }
}

@customElement("status-bar")
class StatusBar extends LitElement {
  static styles = css`
    * { box-sizing: border-box; }
    :host { box-sizing: border-box; display: flex; align-items: center; height: 18px; padding: 1px 3px 0 4px; background: #f0f0f0; border-top: 1px solid #fff; font: 11px/14px "Open Sans", sans-serif; color: #000; gap: 1px; }
    .text { flex: 1; }
    .pane { height: 15px; border: 1px solid #f6f6f6; text-align: center; }
    .w34 { width: 34px; } .w100 { width: 100px; } .w26 { width: 26px; } .w30 { width: 30px; } .w22 { width: 22px; }
  `;
  render() {
    return html`<span class="text">Klar</span>
      ${["w34", "w100", "w26", "w30"].map((w) => html`<span class="pane ${w}"></span>`)}
      <span class="pane w26">NUM</span>
      ${["w30", "w30", "w22"].map((w) => html`<span class="pane ${w}"></span>`)}`;
  }
}

@customElement("app-root")
class AppRoot extends LitElement {
  static styles = css`
    :host { display: flex; flex-direction: column; height: 100vh; overflow: hidden; background: #f0f0f0; }
    work-sheet { flex: 1; }
    title-bar, command-bars, sheet-tabs, drawing-bar, status-bar { flex: none; }
  `;
  render(): TemplateResult {
    return html`<title-bar></title-bar><command-bars></command-bars><work-sheet></work-sheet>
      <sheet-tabs></sheet-tabs><drawing-bar></drawing-bar><status-bar></status-bar>`;
  }
}
